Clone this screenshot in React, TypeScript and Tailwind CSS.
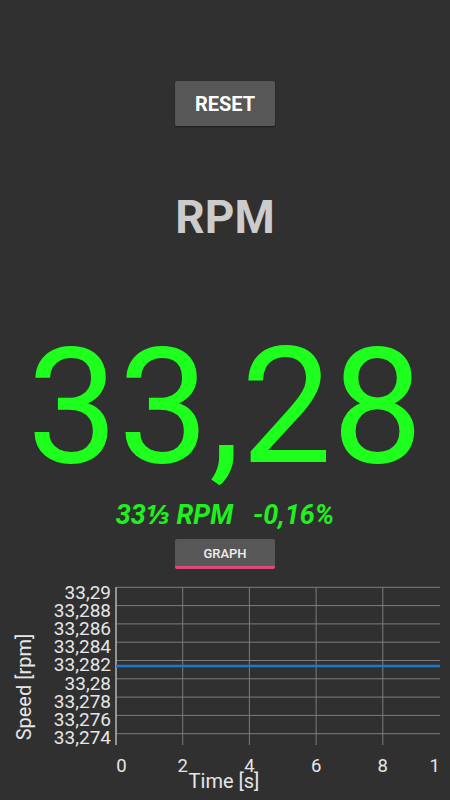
import React from 'react';

// Speed readout screen: reset button, big rpm value, deviation and a graph of recent samples.

const yLabels = ['33,29', '33,288', '33,286', '33,284', '33,282', '33,28', '33,278', '33,276', '33,274'];
const xTicks = [0, 2, 4, 6, 8];

const PLOT_LEFT = 116;
const PLOT_RIGHT = 440;
const PLOT_TOP = 13.3; // svg starts at y=575
const ROW = 18.3;
const COL = 66.7;

function SpeedGraph() {
  return (
    <svg width={450} height={225} viewBox="0 0 450 225" className="block" style={{ fontFamily: 'Roboto, "Noto Sans", sans-serif' }}>
      <defs>
        <clipPath id="plotClip">
          <rect x={0} y={0} width={PLOT_RIGHT} height={225} />
        </clipPath>
      </defs>
      {/* horizontal grid */}
      {yLabels.map((_, i) => (
        <line key={`h${i}`} x1={PLOT_LEFT} x2={PLOT_RIGHT} y1={PLOT_TOP + i * ROW} y2={PLOT_TOP + i * ROW} stroke="#7c7c7c" strokeWidth={1} />
      ))}
      {/* vertical grid */}
      {xTicks.slice(1).map((t) => (
        <line key={`v${t}`} x1={PLOT_LEFT + (t / 2) * COL} x2={PLOT_LEFT + (t / 2) * COL} y1={PLOT_TOP} y2={171} stroke="#7c7c7c" strokeWidth={1} />
      ))}
      {/* y axis */}
      <line x1={PLOT_LEFT} x2={PLOT_LEFT} y1={PLOT_TOP} y2={171} stroke="#b5b5b5" strokeWidth={1.5} />
      {/* data */}
      <line x1={PLOT_LEFT} x2={PLOT_RIGHT} y1={92} y2={92} stroke="#1c78cc" strokeWidth={2.5} />

      {/* y labels */}
      {yLabels.map((l, i) => (
        <text key={l} x={111} y={25 + i * 18.1} textAnchor="end" fontSize={19} fill="#e6e6e6">
          {l}
        </text>
      ))}
      {/* x labels */}
      {xTicks.map((t) => (
        <text key={t} x={t === 0 ? 121.5 : PLOT_LEFT + (t / 2) * COL} y={198} textAnchor="middle" fontSize={18.5} fill="#e6e6e6">
          {t}
        </text>
      ))}
      <text x={440} y={198} textAnchor="middle" fontSize={18.5} fill="#e6e6e6" clipPath="url(#plotClip)">
        10
      </text>
      <text x={224} y={214} textAnchor="middle" fontSize={20} fill="#e6e6e6">
        Time [s]
      </text>
      <text x={31} y={113} transform="rotate(-90 31 113)" textAnchor="middle" fontSize={20} fill="#e6e6e6">
        Speed [rpm]
      </text>
    </svg>
  );
}

export default function App() {
  return (
    <div className="w-[450px] h-[800px] bg-[#303030] flex flex-col items-center overflow-hidden font-['Roboto','Noto_Sans',sans-serif]">
      <button className="mt-[81px] w-[100px] h-[45px] rounded-[2px] bg-[#575757] shadow-[0_1px_2px_rgba(0,0,0,0.4)] flex items-center justify-center text-white text-[20px] font-bold leading-none">
        RESET
      </button>

      <div className="mt-[68px] text-[46px] leading-none font-bold text-[#cccccc]">RPM</div>

      <div className="mt-[86px] text-[162px] leading-none text-[#1eff1e]">33,28</div>

      <div className="mt-[14px] text-[27px] leading-none font-bold italic text-[#20f020] whitespace-pre">
        33⅓ RPM   -0,16%
      </div>

      <button className="mt-[10px] w-[100px] h-[30px] rounded-[2px] bg-[#575757] border-b-[3px] border-[#e0477c] flex items-center justify-center text-[13px] font-medium text-[#eeeeee] leading-none pt-[2px]">
        GRAPH
      </button>

      <div className="mt-[5px]">
        <SpeedGraph />
      </div>
    </div>
  );
}
